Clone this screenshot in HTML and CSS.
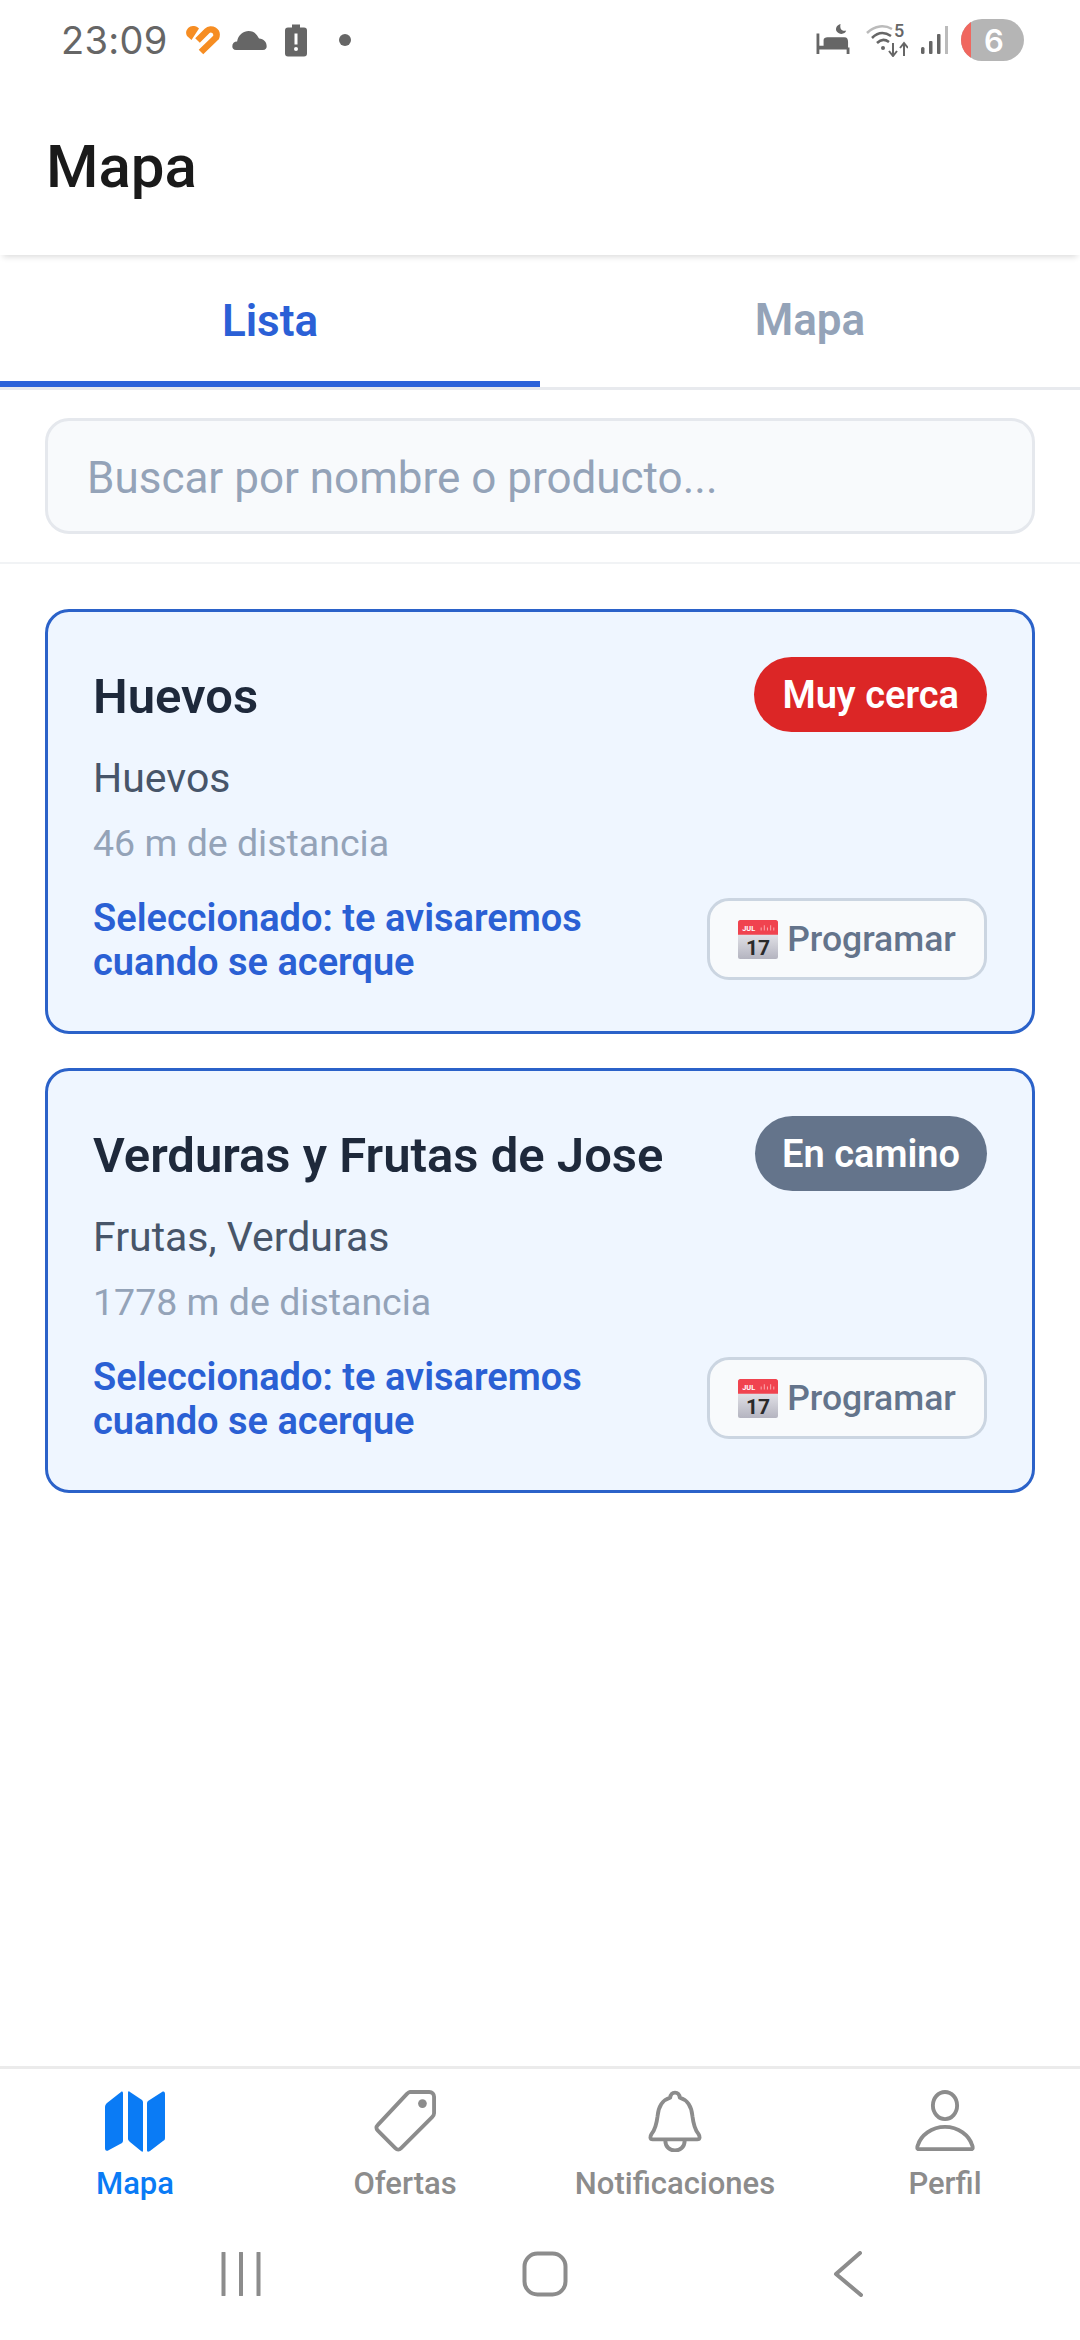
FILE: index.html
```html
<!DOCTYPE html>
<html lang="es">
<head>
<meta charset="utf-8">
<title>Mapa</title>
<link rel="stylesheet" href="styles.css">
</head>
<body>
<div class="screen">
  <div class="status">
    <div class="status-left">
      <span class="time">23:09</span>
      <svg class="si-heart" viewBox="0 0 35 30"><path d="M2 11C-1 6 4 0 9 1 11 1 12.500 2 14 3.500L6.500 15Z" fill="#f68d23"/><path d="M12.500 15.500 22 6C26 2 33.500 6 31 12.500L16 27" fill="none" stroke="#f68d23" stroke-width="6.500" stroke-linecap="butt" stroke-linejoin="round"/></svg>
      <svg class="si-cloud" viewBox="0 0 36 22"><path d="M4 21C1 21 0 19 0 17 0 14 2 12 5 12 6 5 12 1 17 1 23 1 26 5 28 9 33 9 36 13 36 17 36 19 35 21 32 21Z" fill="#666"/></svg>
      <svg class="si-batt" viewBox="0 0 22 32"><path d="M7 0H15V3H19C21 3 22 4 22 6V29C22 31 21 32 19 32H3C1 32 0 31 0 29V6C0 4 1 3 3 3H7Z" fill="#666"/><rect x="9.500" y="9" width="3" height="11" fill="#fff"/><circle cx="11" cy="24.500" r="2" fill="#fff"/></svg>
      <span class="si-dot"></span>
    </div>
    <div class="status-right">
      <svg class="si-bed" viewBox="0 0 34 34"><path d="M1 10V32M33 25V32" stroke="#666" stroke-width="3" fill="none"/><path d="M1 23H33V27H1ZM7 17C7 15 9 14 11 14H29C32 14 33 16 33 19V23H7Z" fill="#666"/><path d="M25 0C24 5 26 8 31 7 30 11 24 12 21 8 19 5 21 1 25 0Z" fill="#666"/></svg>
      <svg class="si-wifi" viewBox="0 -4 42 38"><path d="M1 10C9 2 19 2 26 6" stroke="#bbb" stroke-width="2.500" fill="none"/><path d="M6 15C12 9 19 9 25 13M11 20C15 16 19 16 23 19" stroke="#666" stroke-width="2.500" fill="none"/><circle cx="17" cy="25" r="2" fill="#666"/><path d="M27 20V33M23 28 27 33 31 28M38 33V21M34 25 38 20 42 25" stroke="#666" stroke-width="2" fill="none"/><text x="28" y="14" class="wifi-num">5</text></svg>
      <svg class="si-signal" viewBox="0 0 28 28"><rect x="1" y="21" width="3.500" height="7" rx="1.500" fill="#666"/><rect x="9" y="15" width="3.500" height="13" rx="1" fill="#666"/><rect x="17" y="8" width="3.500" height="20" rx="1" fill="#666"/><rect x="25" y="0" width="3" height="28" fill="#bbb"/></svg>
      <div class="battery"><span class="battery-low"></span><span class="battery-num">6</span></div>
    </div>
  </div>

  <header class="header"><h1 class="title">Mapa</h1></header>

  <nav class="tabs">
    <div class="tab tab-active">Lista</div>
    <div class="tab">Mapa</div>
  </nav>

  <div class="search-wrap">
    <div class="search">Buscar por nombre o producto...</div>
  </div>

  <main class="list">
    <article class="card">
      <div class="card-top">
        <h2 class="card-title">Huevos</h2>
        <span class="badge badge-red">Muy cerca</span>
      </div>
      <p class="card-sub">Huevos</p>
      <p class="card-dist">46 m de distancia</p>
      <div class="card-foot">
        <p class="selected">Seleccionado: te avisaremos cuando se acerque</p>
        <button class="prog">
          <svg class="cal" viewBox="0 0 38 38"><defs><linearGradient id="cg1" x1="0" y1="0" x2="0" y2="1"><stop offset="0" stop-color="#fbfbfd"/><stop offset="1" stop-color="#b4b4c0"/></linearGradient></defs><rect y="1" width="38" height="37" rx="2" fill="url(#cg1)"/><path d="M2 1H36C37 1 38 2 38 3V15H0V3C0 2 1 1 2 1Z" fill="#f0434f"/><text x="4" y="11" class="cal-mon">JUL</text><path d="M22 11V8M25 11V6M28 11V8M31 11V6M34 11V8" stroke="#f9a5ab" stroke-width="1"/><text x="19" y="34" class="cal-num">17</text></svg>
          <span>Programar</span>
        </button>
      </div>
    </article>
    <article class="card">
      <div class="card-top">
        <h2 class="card-title">Verduras y Frutas de Jose</h2>
        <span class="badge badge-slate">En camino</span>
      </div>
      <p class="card-sub">Frutas, Verduras</p>
      <p class="card-dist">1778 m de distancia</p>
      <div class="card-foot">
        <p class="selected">Seleccionado: te avisaremos cuando se acerque</p>
        <button class="prog">
          <svg class="cal" viewBox="0 0 38 38"><rect y="1" width="38" height="37" rx="2" fill="url(#cg1)"/><path d="M2 1H36C37 1 38 2 38 3V15H0V3C0 2 1 1 2 1Z" fill="#f0434f"/><text x="4" y="11" class="cal-mon">JUL</text><path d="M22 11V8M25 11V6M28 11V8M31 11V6M34 11V8" stroke="#f9a5ab" stroke-width="1"/><text x="19" y="34" class="cal-num">17</text></svg>
          <span>Programar</span>
        </button>
      </div>
    </article>
  </main>

  <nav class="bottom">
    <div class="bn bn-active">
      <svg class="bn-icon" viewBox="1 0 62 62"><path d="M2 17C2 15 3 14 4 13L18 2C19 1 20 2 20 3V50C20 51 20 52 19 53L6 60C3 62 2 60 2 58ZM25 3C25 1 26 1 27 2L39 10C40 11 40 12 40 13V61C40 62 39 62 38 61L27 52C26 51 25 50 25 49ZM44 14C44 13 44 12 45 11L59 2C61 1 62 2 62 4V47C62 49 62 50 60 51L47 61C45 62 44 62 44 60Z" fill="#0a7bf5"/></svg>
      <span>Mapa</span>
    </div>
    <div class="bn">
      <svg class="bn-icon" viewBox="0 0 64 64"><path d="M37 2H57C60 2 62 4 62 7V24C62 26 61 27 60 28L28 60C26 62 24 62 22 60L4 42C2 40 2 38 4 36L34 4C35 3 36 2 37 2Z" fill="none" stroke="#8c8c8c" stroke-width="4" stroke-linejoin="round"/><circle cx="50" cy="14" r="4.500" fill="#8c8c8c"/></svg>
      <span>Ofertas</span>
    </div>
    <div class="bn">
      <svg class="bn-icon" viewBox="0 0 64 64"><path d="M9 51H55C58 51 58 48 56 45 52 40 51 35 50 27 49 16 44 10 37 8 36 1 28 1 27 8 20 10 15 16 14 27 13 35 12 40 8 45 6 48 6 51 9 51Z" fill="none" stroke="#8c8c8c" stroke-width="4" stroke-linejoin="round"/><path d="M22 52C22 66 42 66 42 52" fill="none" stroke="#8c8c8c" stroke-width="4"/></svg>
      <span>Notificaciones</span>
    </div>
    <div class="bn">
      <svg class="bn-icon" viewBox="0 0 64 64"><ellipse cx="32" cy="16" rx="12.500" ry="14" fill="none" stroke="#8c8c8c" stroke-width="4"/><path d="M5 61C3 61 3 59 4 57 7 47 18 38 32 38 46 38 57 47 60 57 61 59 61 61 59 61Z" fill="none" stroke="#8c8c8c" stroke-width="4" stroke-linejoin="round"/></svg>
      <span>Perfil</span>
    </div>
  </nav>

  <div class="sysnav">
    <svg class="sys-recent" viewBox="0 0 40 44"><path d="M2.500 1V43M20 1V43M37.500 1V43" stroke="#8c8c8c" stroke-width="4" stroke-linecap="round"/></svg>
    <svg class="sys-home" viewBox="0 0 46 46"><rect x="2.500" y="2.500" width="41" height="41" rx="13" fill="none" stroke="#8c8c8c" stroke-width="4"/></svg>
    <svg class="sys-back" viewBox="0 0 30 46"><path d="M27 2 3 23 28 44" fill="none" stroke="#8c8c8c" stroke-width="4" stroke-linecap="round" stroke-linejoin="round"/></svg>
  </div>
</div>
</body>
</html>
```

FILE: styles.css
```css
* { box-sizing: border-box; }
html, body { margin: 0; padding: 0; background: #fff; }
body { font-family: Roboto, "Noto Sans", sans-serif; }
.screen { width: 1080px; height: 2340px; display: flex; flex-direction: column; background: #fff; overflow: hidden; }

.status { height: 80px; display: flex; justify-content: space-between; align-items: center; padding: 0 56px 0 61px; flex: none; }
.status-left, .status-right { display: flex; align-items: center; }
.time { font-size: 38px; color: #666; font-family: Inter, Roboto, sans-serif; width: 105px; letter-spacing: 0.300px; white-space: nowrap; }
.si-heart { width: 35px; height: 30px; margin-left: 19px; }
.si-cloud { width: 35px; height: 21px; margin-left: 12px; }
.si-batt { width: 22px; height: 33px; margin-left: 18px; }
.si-dot { width: 12px; height: 12px; border-radius: 50%; background: #666; margin-left: 32px; }
.si-bed { width: 34px; height: 32px; margin-left: 1px; }
.si-wifi { width: 42px; height: 38px; margin-left: 16px; margin-top: -4px; }
.wifi-num { font: 500 18px Roboto, sans-serif; fill: #666; }
.si-signal { width: 28px; height: 28px; margin-left: 12px; }
.battery { width: 63px; height: 42px; border-radius: 21px; background: #b5b5b5; margin-left: 13px; position: relative; overflow: hidden; display: flex; align-items: center; justify-content: center; }
.battery-low { position: absolute; left: 0; top: 0; bottom: 0; width: 10px; background: #f0675f; }
.battery-num { color: #fff; font-size: 31px; font-weight: 600; font-family: Inter, Roboto, sans-serif; padding-left: 3px; }

.header { height: 175px; flex: none; display: flex; align-items: flex-start; padding: 60px 46px 0; box-shadow: 0 5px 6px -3px rgba(0,0,0,.14); position: relative; background: #fff; }
.title { margin: 0; font-size: 60px; font-weight: 500; line-height: 54px; color: #1a1a1a; }

.tabs { height: 135px; flex: none; display: flex; border-bottom: 3px solid #e8eaee; }
.tab { flex: 1; display: flex; align-items: center; justify-content: center; font-size: 44px; font-weight: 600; color: #94a3b8; padding-top: 0; height: 135px; border-bottom: 6px solid transparent; }
.tab-active { color: #2b60d6; border-bottom-color: #2b62d9; height: 132px; padding-top: 5px; }

.search-wrap { flex: none; padding: 28px 45px; border-bottom: 2px solid #f1f3f5; }
.search { height: 116px; border: 3px solid #e5e8ed; border-radius: 24px; background: #f8fafc; font-size: 44px; color: #94a3b8; display: flex; align-items: center; padding: 3px 0 0 39px; }

.list { flex: 1; padding: 45px 45px 0; display: flex; flex-direction: column; gap: 34px; }
.card { height: 425px; background: #eff6ff; border: 3px solid #2b62c9; border-radius: 24px; padding: 45px 45px 0 45px; }
.card-top { display: flex; justify-content: space-between; align-items: flex-start; height: 75px; }
.card-title { margin: 2px 0 0; font-size: 49px; font-weight: 600; line-height: 75px; color: #1e293b; }
.badge { height: 75px; border-radius: 38px; color: #fff; font-size: 38px; font-weight: 600; display: flex; align-items: center; justify-content: center; padding: 0 28px; }
.badge-red { background: #dc2626; }
.badge-slate { background: #64748b; padding: 0 27px; }
.card-sub { margin: 21px 0 0; font-size: 41px; line-height: 50px; color: #475569; }
.card-dist { margin: 16px 0 0; font-size: 37.500px; line-height: 48px; color: #94a3b8; }
.card-foot { display: flex; justify-content: space-between; align-items: center; margin-top: 29px; }
.selected { margin: 0; width: 530px; font-size: 38px; line-height: 44px; font-weight: 600; color: #2a60d4; }
.prog { width: 280px; height: 82px; margin-bottom: 3px; border: 3px solid #cbd5e1; border-radius: 22px; background: #f8fafc; display: flex; align-items: center; justify-content: center; gap: 9px; padding: 0; font-family: inherit; font-size: 35.500px; font-weight: 500; color: #64748b; }
.cal { width: 40px; height: 40px; }
.cal-num { font: 700 20px Roboto, sans-serif; fill: #2a2a2a; text-anchor: middle; }
.cal-mon { font: 700 7px Roboto, sans-serif; fill: #fff; }

.bottom { height: 167px; flex: none; display: grid; grid-template-columns: repeat(4, 1fr); border-top: 3px solid #ebebeb; padding-top: 21px; }
.bn { display: flex; flex-direction: column; align-items: center; font-size: 31px; font-weight: 500; color: #8c8c8c; gap: 12px; line-height: 40px; }
.bn-active { color: #0a7bf5; }
.bn-icon { width: 62px; height: 62px; }

.sysnav { height: 107px; flex: none; display: flex; align-items: flex-start; }
.sysnav svg { flex: none; }
.sys-recent { width: 40px; height: 44px; margin: 19px 0 0 221px; }
.sys-home { width: 46px; height: 46px; margin: 18px 0 0 261px; }
.sys-back { width: 30px; height: 46px; margin: 18px 0 0 265px; }
```
